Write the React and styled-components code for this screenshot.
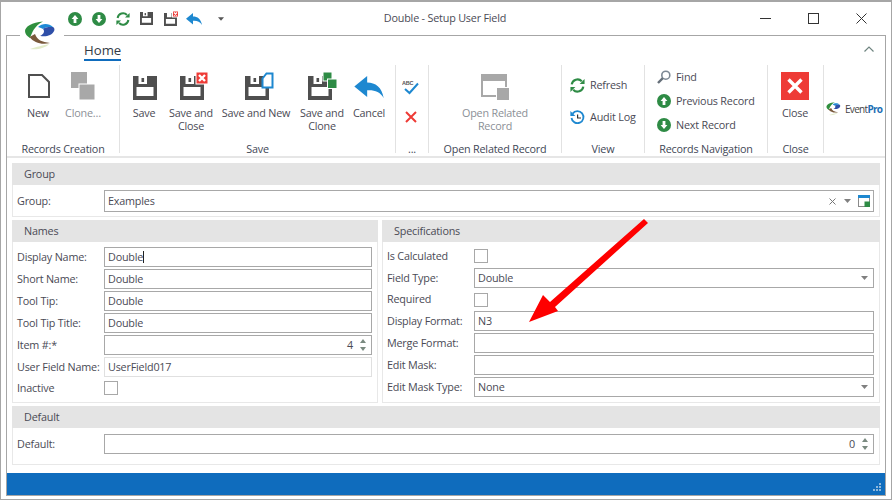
import React from "react";
import styled, { createGlobalStyle } from "styled-components";

const GlobalStyle = createGlobalStyle`
  html, body {
    margin: 0;
    padding: 0;
    background: #fff;
  }
  body {
    font-family: "Open Sans", "Liberation Sans", sans-serif;
    font-size: 10.8px;
    letter-spacing: -0.2px;
    color: #4a4a55;
  }
`;

const Window = styled.div`
  position: relative;
  box-sizing: border-box;
  width: 892px;
  height: 500px;
  border: 1px solid #a6a6a6;
  border-top-width: 2px;
  background: #fff;
  display: flex;
  flex-direction: column;
  overflow: hidden;
`;

const TitleBar = styled.div`
  position: relative;
  height: 33px;
  flex: none;
  display: flex;
  align-items: center;
  padding-left: 67px;
`;

const Quick = styled.span`
  width: ${(p) => p.$w || 24}px;
  display: flex;
  align-items: center;
  svg { display: block; }
`;

const Title = styled.div`
  position: absolute;
  left: 0;
  right: 0;
  top: 8px;
  text-align: center;
  font-size: 10.8px;
  line-height: 16px;
  padding-right: 2px;
`;

const WinButtons = styled.div`
  position: absolute;
  right: 24px;
  top: 11px;
  display: flex;
  gap: 37px;
  svg { display: block; }
`;

const Frame = styled.div`
  box-sizing: border-box;
  margin: 0 5px 3px 5px;
  flex: 1;
  border: 1px solid #a6a6a6;
  display: flex;
  flex-direction: column;
  min-height: 0;
`;

const Logo = styled.div`
  position: absolute;
  left: 19px;
  top: 12px;
  width: 44px;
  height: 40px;
  background: #fff;
  svg { display: block; }
`;

const TabRow = styled.div`
  height: 29px;
  flex: none;
  position: relative;
  padding-left: 77px;
`;

const Tab = styled.div`
  display: inline-block;
  font-size: 13.2px;
  letter-spacing: 0;
  line-height: 18px;
  margin-top: 5px;
  border-bottom: 2px solid #0f6cbd;
  color: #333a46;
`;

const Collapse = styled.span`
  position: absolute;
  right: 11px;
  top: 10px;
  svg { display: block; }
`;

const Ribbon = styled.div`
  box-sizing: border-box;
  height: 93px;
  flex: none;
  display: flex;
  border-bottom: 2px solid #e6e6e6;
  padding-bottom: 3px;
`;

const RibbonGroup = styled.div`
  box-sizing: border-box;
  width: ${(p) => p.$w}px;
  flex: none;
  border-right: ${(p) => (p.$plain ? "none" : "1px solid #e2e2e2")};
  display: flex;
  flex-direction: column;
`;

const GroupBody = styled.div`
  flex: 1;
  display: flex;
  flex-direction: ${(p) => (p.$stack ? "column" : "row")};
  align-items: ${(p) => (p.$stack ? "flex-start" : "stretch")};
  padding-left: ${(p) => p.$pad || 0}px;
  padding-top: ${(p) => p.$top || 0}px;
  gap: ${(p) => p.$gap || 0}px;
  min-height: 0;
`;

const GroupLabel = styled.div`
  height: 12px;
  line-height: 16px;
  text-align: center;
  font-size: 10.8px;
  color: #3f4756;
  white-space: nowrap;
`;

const BigButton = styled.div`
  width: ${(p) => p.$w}px;
  flex: none;
  display: flex;
  flex-direction: column;
  align-items: center;
  padding-top: 7px;
  color: ${(p) => (p.$off ? "#8b8f96" : "#4a4a55")};
`;

const IconSlot = styled.div`
  height: 28px;
  box-sizing: border-box;
  margin-left: ${(p) => p.$dx || 0}px;
  padding-top: ${(p) => p.$dy || 0}px;
  svg { display: block; }
`;

const BigLabel = styled.div`
  margin-top: 6px;
  font-size: 10.8px;
  line-height: 13px;
  text-align: center;
  white-space: pre-line;
`;

const SmallButton = styled.div`
  display: flex;
  align-items: center;
  gap: 5px;
  height: 24px;
  font-size: 10.8px;
  white-space: nowrap;
  svg { display: block; flex: none; }
`;

const SmallText = styled.span`
  padding-bottom: 2px;
`;

const RedXSlot = styled.span`
  padding-left: 3px;
  svg { display: block; }
`;

const Content = styled.div`
  flex: 1;
  display: flex;
  flex-direction: column;
  gap: 3px;
  padding: 5px 5px 0 5px;
  min-height: 0;
`;

const Section = styled.div`
  box-sizing: border-box;
  border: 1px solid #e8e8e8;
  border-top: none;
  height: ${(p) => p.$h}px;
  width: ${(p) => (p.$w ? `${p.$w}px` : "auto")};
  flex: ${(p) => (p.$grow ? "1" : "none")};
  min-width: 0;
`;

const SectionHead = styled.div`
  height: 22px;
  line-height: 22px;
  background: #e4e4e4;
  padding-left: 12px;
  margin: 0 -1px;
  font-size: 10.8px;
  color: #4a4a55;
`;

const Columns = styled.div`
  display: flex;
  gap: 4px;
`;

const Rows = styled.div`
  padding: ${(p) => p.$top}px 5px 0 4px;
  display: flex;
  flex-direction: column;
  gap: 2px;
`;

const Row = styled.div`
  display: flex;
  align-items: center;
  height: ${(p) => p.$h || 20}px;
`;

const Label = styled.div`
  width: 87px;
  flex: none;
  font-size: 10.8px;
  padding-bottom: 2px;
  white-space: nowrap;
  color: #4a4a55;
`;

const Field = styled.div`
  box-sizing: border-box;
  flex: 1;
  height: ${(p) => p.$h || 20}px;
  border: 1px solid ${(p) => (p.$soft ? "#e0e0e0" : "#a8a8a8")};
  background: #fff;
  display: flex;
  align-items: center;
  justify-content: ${(p) => (p.$right ? "flex-end" : "flex-start")};
  padding: 0 2px 0 3px;
  font-size: 10.8px;
  color: #4a4a55;
  min-width: 0;
  gap: 3px;
`;

const Value = styled.span`
  flex: ${(p) => (p.$right ? "none" : "1")};
  padding-bottom: 2px;
  white-space: nowrap;
`;

const Caret = styled.span`
  display: inline-block;
  width: 1px;
  height: 12px;
  background: #222;
  vertical-align: -2px;
`;

const Check = styled.div`
  box-sizing: border-box;
  width: 14px;
  height: 14px;
  border: 1px solid #a8a8a8;
  background: #fff;
`;

const StatusBar = styled.div`
  position: relative;
  height: 22px;
  flex: none;
  margin-top: 6px;
  background: #0f6cbd;
`;

const Grip = styled.span`
  position: absolute;
  right: 3px;
  bottom: 3px;
  svg { display: block; }
`;

const ArrowLayer = styled.svg`
  position: absolute;
  left: 519px;
  top: 211px;
`;

const LogoWord = styled.span`
  font-size: 10px;
  letter-spacing: -0.7px;
  color: #444;
  b { color: #1d6fb5; font-weight: 700; }
`;

const LogoWrap = styled.div`
  display: flex;
  align-items: center;
  gap: 4px;
  padding: 36px 0 0 2px;
  svg { display: block; }
`;

const DropSlot = styled.span`
  flex: none;
  display: flex;
  align-items: center;
  gap: ${(p) => p.$gap || 0}px;
  padding-right: ${(p) => p.$pr ?? 3}px;
  svg { display: block; }
`;

const SpinSlot = styled.span`
  flex: none;
  display: flex;
  flex-direction: column;
  gap: 4px;
  padding: 0 3px 0 4px;
  svg { display: block; }
`;

const GREEN = "#2e8b45";
const BLUE = "#1e88d0";
const RED = "#ee3b36";
const DARK = "#4f4f4f";

const Circle = ({ down, size = 14 }) => (
  <svg width={size} height={size} viewBox="0 0 14 14">
    <circle cx="7" cy="7" r="7" fill={GREEN} />
    <path
      d={down ? "M5.6 3h2.8v4h2L7 11 3.6 7h2z" : "M5.6 11h2.8V7h2L7 3 3.6 7h2z"}
      fill="#fff"
    />
  </svg>
);

const Refresh = ({ size = 14, color = GREEN }) => (
  <svg width={size} height={size} viewBox="0 0 14 14" fill="none">
    <path d="M1.6 6A5.5 5.5 0 0 1 11 3" stroke={color} strokeWidth="2" />
    <path d="M9 5.6h4.6V1z" fill={color} />
    <path d="M12.4 8A5.5 5.5 0 0 1 3 11" stroke={color} strokeWidth="2" />
    <path d="M5 8.4H.4V13z" fill={color} />
  </svg>
);

const floppyPath = "M0 0H24V24H0Z M5.5 0V8H14V0Z M3.5 11V20H20.5V11Z";

const FloppyShape = () => (
  <>
    <path d={floppyPath} fill={DARK} fillRule="evenodd" />
    <rect x="8.5" y="2" width="2.6" height="4" fill={DARK} />
  </>
);

const Floppy = ({ size = 24 }) => (
  <svg width={size} height={size} viewBox="0 0 24 24">
    <FloppyShape />
  </svg>
);

const BadgeX = ({ x, y, s }) => (
  <g>
    <rect x={x} y={y} width={s} height={s} fill={RED} stroke="#fff" strokeWidth="1" />
    <path
      d={`M${x + s * 0.25} ${y + s * 0.25}L${x + s * 0.75} ${y + s * 0.75}M${x + s * 0.75} ${y + s * 0.25}L${x + s * 0.25} ${y + s * 0.75}`}
      stroke="#fff"
      strokeWidth={s * 0.2}
    />
  </g>
);

const SaveIcon = ({ badge }) => (
  <svg width={badge ? 30 : 24} height="28" viewBox={`0 0 ${badge ? 30 : 24} 28`}>
    <g transform="translate(0 4)">
      <FloppyShape />
    </g>
    {badge === "close" && <BadgeX x={16} y={0} s={12} />}
    {badge === "new" && (
      <path
        d="M17.5 6.5L21.5 1.5H27.5V15.5H17.5Z"
        fill="#fff"
        stroke={BLUE}
        strokeWidth="2"
      />
    )}
    {badge === "clone" && (
      <g fill={GREEN} stroke="#fff" strokeWidth="1">
        <rect x="15" y="0" width="9" height="9" />
        <rect x="19.5" y="7" width="9.5" height="9.5" />
      </g>
    )}
  </svg>
);

const Undo = ({ w = 32, h = 22 }) => (
  <svg width={w} height={h} viewBox="0 0 32 24">
    <path
      d="M0 11.5L14 0V7C23 7 30 12 32 24C28 17 22 15 14 15.5V23Z"
      fill={BLUE}
    />
  </svg>
);

const NewDoc = () => (
  <svg width="28" height="28" viewBox="0 0 28 28" fill="none">
    <path d="M5 3H18L25 10V25H5Z" stroke={DARK} strokeWidth="2" />
  </svg>
);

const CloneIcon = () => (
  <svg width="28" height="28" viewBox="0 0 28 28">
    <rect x="2" y="0" width="16" height="16" fill="#a8a8a8" />
    <rect x="10" y="12" width="16" height="16" fill="#a8a8a8" stroke="#fff" strokeWidth="1" />
  </svg>
);

const RelatedIcon = () => (
  <svg width="28" height="28" viewBox="0 0 28 28">
    <path d="M1 3H25V24H1Z" fill="#fff" stroke="#a8a8a8" strokeWidth="2" />
    <rect x="0" y="2" width="26" height="7" fill="#a8a8a8" />
    <rect x="15.5" y="15.5" width="13" height="13" fill="#a8a8a8" stroke="#fff" strokeWidth="1" />
  </svg>
);

const CloseIcon = () => (
  <svg width="28" height="28" viewBox="0 0 28 28">
    <rect width="28" height="28" fill={RED} />
    <path d="M7.5 7.5L20.5 20.5M20.5 7.5L7.5 20.5" stroke="#fff" strokeWidth="3.4" />
  </svg>
);

const SpellIcon = () => (
  <svg width="18" height="16" viewBox="0 0 18 16">
    <text x="0" y="5.5" fontSize="5.5" fontWeight="700" fill="#555" fontFamily="Liberation Sans, sans-serif">
      ABC
    </text>
    <path d="M3 10L7.5 14L16 4.5" fill="none" stroke={BLUE} strokeWidth="2" />
  </svg>
);

const RedX = () => (
  <svg width="12" height="12" viewBox="0 0 12 12">
    <path d="M1 1L11 11M11 1L1 11" stroke={RED} strokeWidth="2" />
  </svg>
);

const AuditIcon = () => (
  <svg width="15" height="15" viewBox="0 0 15 15" fill="none">
    <path d="M2.6 3.6A6 6 0 1 1 1.5 8" stroke={BLUE} strokeWidth="1.8" />
    <path d="M0.4 1V6H5.4z" fill={BLUE} />
    <path d="M7.6 4.4V8H11" stroke="#333" strokeWidth="1.2" />
  </svg>
);

const FindIcon = () => (
  <svg width="14" height="14" viewBox="0 0 14 14" fill="none">
    <circle cx="8.8" cy="5.2" r="4" stroke="#7c8894" strokeWidth="1.6" />
    <path d="M5.8 8.2L1 13" stroke="#66707a" strokeWidth="2.4" />
  </svg>
);

const SmallX = () => (
  <svg width="9" height="9" viewBox="0 0 9 9">
    <path d="M1.5 1.5L7.5 7.5M7.5 1.5L1.5 7.5" stroke="#777" strokeWidth="1" />
  </svg>
);

const Drop = ({ w = 7, gray = "#808080" }) => (
  <svg width={w} height="4" viewBox="0 0 7 4">
    <path d="M0 0H7L3.5 4Z" fill={gray} />
  </svg>
);

const PickIcon = () => (
  <svg width="12" height="12" viewBox="0 0 12 12">
    <rect x="0.5" y="0.5" width="11" height="11" fill="#fff" stroke="#8a8a8a" />
    <rect x="0" y="0" width="12" height="3" fill={BLUE} />
    <rect x="6.5" y="6.5" width="5.5" height="5.5" fill={GREEN} />
  </svg>
);

const Spin = () => (
  <SpinSlot>
    <svg width="6" height="4" viewBox="0 0 6 4"><path d="M0 4H6L3 0Z" fill="#7a8a80" /></svg>
    <svg width="6" height="4" viewBox="0 0 6 4"><path d="M0 0H6L3 4Z" fill="#7a8a80" /></svg>
  </SpinSlot>
);

const Select = ({ value }) => (
  <Field>
    <Value>{value}</Value>
    <DropSlot><Drop /></DropSlot>
  </Field>
);

const BrandMark = ({ w, h, box = "0 0 44 40" }) => (
  <svg width={w} height={h} viewBox={box}>
    <path d="M23 7.5C12 8 5 13 5 17C5 20 7 22 10 24C12 19 14 12 23 7.5Z" fill="#2f8f3e" />
    <path d="M9.5 23C14 29 22 31 30 29C22 28 17 26 15 20Z" fill="#7a5a3c" />
    <path d="M18 13C22 9 29 9 33 13C28 13 26 13 23 15C21 14 19 13 18 13Z" fill="#1e8ad6" />
    <path d="M33 13C36 15 34 19 30 21C26 23 22 22 20 22C24 20 25 17 23 15C26 13 28 13 33 13Z" fill="#2f4fa8" />
    <path d="M10 35C16 33 24 31 29 30C26 34 17 36 10 35Z" fill="#e3ecc9" />
  </svg>
);

const Arrow = () => (
  <ArrowLayer width="135" height="115" viewBox="0 0 135 115">
    <path d="M9 109L23 82L30 89L124 6L128 10L35 94L38 98Z" fill="#fe0000" />
  </ArrowLayer>
);

export default function App() {
  return (
    <>
      <GlobalStyle />
      <Window>
        <TitleBar>
          <Quick><Circle /></Quick>
          <Quick><Circle down /></Quick>
          <Quick><Refresh /></Quick>
          <Quick><Floppy size={13} /></Quick>
          <Quick $w={22}>
            <svg width="15" height="15" viewBox="0 0 15 15">
              <g transform="translate(0 2) scale(.54)">
                <path d={floppyPath} fill={DARK} fillRule="evenodd" />
              </g>
              <BadgeX x={8.5} y={0} s={6} />
            </svg>
          </Quick>
          <Quick $w={32}><Undo w={16} h={12} /></Quick>
          <Quick><Drop w={6} gray="#555" /></Quick>
          <Title>Double - Setup User Field</Title>
          <WinButtons>
            <svg width="11" height="11" viewBox="0 0 11 11"><path d="M0 5.5H11" stroke="#333" /></svg>
            <svg width="11" height="11" viewBox="0 0 11 11"><rect x=".5" y=".5" width="10" height="10" fill="none" stroke="#333" /></svg>
            <svg width="11" height="11" viewBox="0 0 11 11"><path d="M.5 .5L10.5 10.5M10.5 .5L.5 10.5" stroke="#333" /></svg>
          </WinButtons>
        </TitleBar>
        <Frame>
          <TabRow>
            <Tab>Home</Tab>
            <Collapse>
              <svg width="10" height="6" viewBox="0 0 10 6" fill="none">
                <path d="M.5 5.5L5 1L9.5 5.5" stroke="#6f8580" strokeWidth="1.2" />
              </svg>
            </Collapse>
          </TabRow>
          <Ribbon>
            <RibbonGroup $w={113}>
              <GroupBody $pad={9}>
                <BigButton $w={44}><IconSlot><NewDoc /></IconSlot><BigLabel>New</BigLabel></BigButton>
                <BigButton $w={46} $off><IconSlot><CloneIcon /></IconSlot><BigLabel>Clone…</BigLabel></BigButton>
              </GroupBody>
              <GroupLabel>Records Creation</GroupLabel>
            </RibbonGroup>
            <RibbonGroup $w={276}>
              <GroupBody $pad={1}>
                <BigButton $w={46}><IconSlot $dx={2}><SaveIcon /></IconSlot><BigLabel>Save</BigLabel></BigButton>
                <BigButton $w={48}><IconSlot $dx={8}><SaveIcon badge="close" /></IconSlot><BigLabel>{"Save and\nClose"}</BigLabel></BigButton>
                <BigButton $w={82}><IconSlot $dx={8}><SaveIcon badge="new" /></IconSlot><BigLabel>Save and New</BigLabel></BigButton>
                <BigButton $w={50}><IconSlot $dx={2}><SaveIcon badge="clone" /></IconSlot><BigLabel>{"Save and\nClone"}</BigLabel></BigButton>
                <BigButton $w={44}><IconSlot $dy={4}><Undo /></IconSlot><BigLabel>Cancel</BigLabel></BigButton>
              </GroupBody>
              <GroupLabel>Save</GroupLabel>
            </RibbonGroup>
            <RibbonGroup $w={33}>
              <GroupBody $stack $pad={6} $top={14} $gap={16}>
                <SpellIcon />
                <RedXSlot><RedX /></RedXSlot>
              </GroupBody>
              <GroupLabel>...</GroupLabel>
            </RibbonGroup>
            <RibbonGroup $w={133}>
              <GroupBody>
                <BigButton $w={132} $off><IconSlot><RelatedIcon /></IconSlot><BigLabel>{"Open Related\nRecord"}</BigLabel></BigButton>
              </GroupBody>
              <GroupLabel>Open Related Record</GroupLabel>
            </RibbonGroup>
            <RibbonGroup $w={83}>
              <GroupBody $stack $pad={8} $top={8} $gap={8}>
                <SmallButton><Refresh size={15} /><SmallText>Refresh</SmallText></SmallButton>
                <SmallButton><AuditIcon /><SmallText>Audit Log</SmallText></SmallButton>
              </GroupBody>
              <GroupLabel>View</GroupLabel>
            </RibbonGroup>
            <RibbonGroup $w={123}>
              <GroupBody $stack $pad={12}>
                <SmallButton><FindIcon /><SmallText>Find</SmallText></SmallButton>
                <SmallButton><Circle /><SmallText>Previous Record</SmallText></SmallButton>
                <SmallButton><Circle down /><SmallText>Next Record</SmallText></SmallButton>
              </GroupBody>
              <GroupLabel>Records Navigation</GroupLabel>
            </RibbonGroup>
            <RibbonGroup $w={56}>
              <GroupBody>
                <BigButton $w={54}><IconSlot><CloseIcon /></IconSlot><BigLabel>Close</BigLabel></BigButton>
              </GroupBody>
              <GroupLabel>Close</GroupLabel>
            </RibbonGroup>
            <RibbonGroup $w={60} $plain>
              <LogoWrap>
                <BrandMark w={15} h={15} box="4 5 32 32" />
                <LogoWord>Event<b>Pro</b></LogoWord>
              </LogoWrap>
            </RibbonGroup>
          </Ribbon>
          <Content>
            <Section $h={54}>
              <SectionHead>Group</SectionHead>
              <Rows $top={5}>
                <Row $h={22}>
                  <Label>Group:</Label>
                  <Field $h={22}>
                    <Value>Examples</Value>
                    <DropSlot $gap={7} $pr={1}><SmallX /><Drop /><PickIcon /></DropSlot>
                  </Field>
                </Row>
              </Rows>
            </Section>
            <Columns>
              <Section $h={183} $w={366}>
                <SectionHead>Names</SectionHead>
                <Rows $top={5}>
                  <Row><Label>Display Name:</Label><Field><Value>Double<Caret /></Value></Field></Row>
                  <Row><Label>Short Name:</Label><Field><Value>Double</Value></Field></Row>
                  <Row><Label>Tool Tip:</Label><Field><Value>Double</Value></Field></Row>
                  <Row><Label>Tool Tip Title:</Label><Field><Value>Double</Value></Field></Row>
                  <Row><Label>Item #:*</Label><Field $right><Value $right>4</Value><Spin /></Field></Row>
                  <Row><Label>User Field Name:</Label><Field $soft><Value>UserField017</Value></Field></Row>
                  <Row $h={18}><Label>Inactive</Label><Check /></Row>
                </Rows>
              </Section>
              <Section $h={183} $grow>
                <SectionHead>Specifications</SectionHead>
                <Rows $top={4}>
                  <Row><Label>Is Calculated</Label><Check /></Row>
                  <Row><Label>Field Type:</Label><Select value="Double" /></Row>
                  <Row $h={19}><Label>Required</Label><Check /></Row>
                  <Row><Label>Display Format:</Label><Field><Value>N3</Value></Field></Row>
                  <Row><Label>Merge Format:</Label><Field /></Row>
                  <Row><Label>Edit Mask:</Label><Field /></Row>
                  <Row><Label>Edit Mask Type:</Label><Select value="None" /></Row>
                </Rows>
              </Section>
            </Columns>
            <Section $h={59}>
              <SectionHead>Default</SectionHead>
              <Rows $top={6}>
                <Row><Label>Default:</Label><Field $right><Value $right>0</Value><Spin /></Field></Row>
              </Rows>
            </Section>
          </Content>
          <StatusBar>
            <Grip>
              <svg width="10" height="10" viewBox="0 0 10 10" fill="#8fb8dc">
                <rect x="7" y="1" width="2" height="2" />
                <rect x="4" y="4" width="2" height="2" />
                <rect x="7" y="4" width="2" height="2" />
                <rect x="1" y="7" width="2" height="2" />
                <rect x="4" y="7" width="2" height="2" />
                <rect x="7" y="7" width="2" height="2" />
              </svg>
            </Grip>
          </StatusBar>
        </Frame>
        <Logo><BrandMark w={44} h={40} /></Logo>
        <Arrow />
      </Window>
    </>
  );
}
